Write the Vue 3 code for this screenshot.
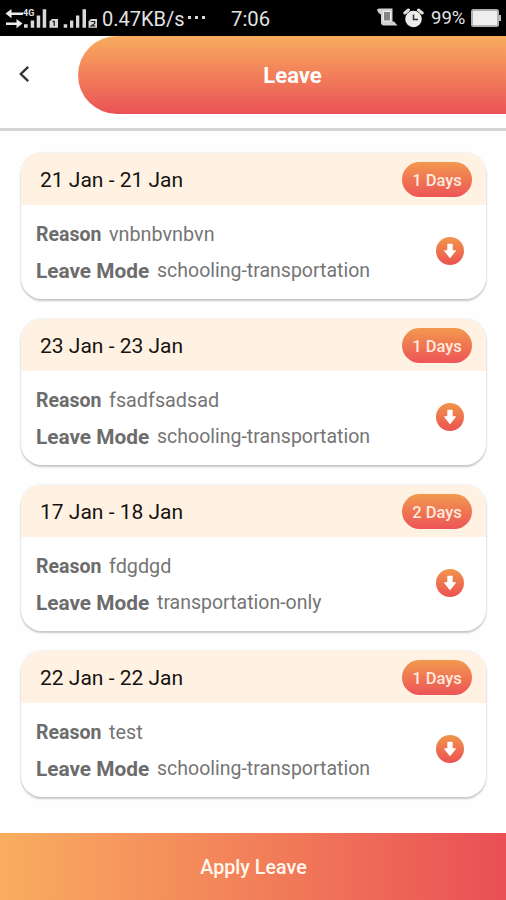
<script setup>
const leaves = [
  { id: 1, dates: '21 Jan - 21 Jan', days: 1, reason: 'vnbnbvnbvn', mode: 'schooling-transportation' },
  { id: 2, dates: '23 Jan - 23 Jan', days: 1, reason: 'fsadfsadsad', mode: 'schooling-transportation' },
  { id: 3, dates: '17 Jan - 18 Jan', days: 2, reason: 'fdgdgd', mode: 'transportation-only' },
  { id: 4, dates: '22 Jan - 22 Jan', days: 1, reason: 'test', mode: 'schooling-transportation' },
]
</script>

<template>
  <div class="screen">
    <div class="status">
      <svg class="signals" width="94" height="24" viewBox="0 0 94 24">
        <path d="M0.500 6.600L6.500 2V5.500H18V7.900H6.500V11.200zM17.500 16.600L11.500 12V15.500H1V17.900H11.500V21.200z" fill="#ececec" />
        <text x="18" y="8.500" class="network">4G</text>
        <g fill="#dadada">
          <path d="M19 17.300h3.700v3.500H19zM25.700 13.500h3.500v7.300h-3.500zM31.700 8.500h3.500v12.300h-3.500zM37.700 2.200h3.500v18.600h-3.500z" />
          <path d="M58.700 17.300h3.500v3.500h-3.500zM65 13.500h3.300v7.300H65zM71 8.500h3.300v12.300H71zM77.500 2.200H81v18.600h-3.500z" />
          <path d="M47 12h6v8.800h-8.500V14.500z" />
          <path d="M86 12h6v8.800h-8.500V14.500z" />
        </g>
        <path d="M47.500 14.500h1.700v4.500" fill="none" stroke="#222" stroke-width="1.300" />
        <path d="M85.700 14.500h4v2l-3.500 2.300h4" fill="none" stroke="#222" stroke-width="1.200" />
      </svg>
      <span class="speed">0.47KB/s</span>
      <span class="dots"><i></i><i></i><i></i></span>
      <span class="clock">7:06</span>
      <svg class="scroll" width="21" height="19" viewBox="0 0 21 19">
        <path d="M0 1.500Q1 0.500 3 0.500H15.500V13.500H17L20.500 17.500H7Q4 17.500 4 14.500V6.500Q1 5.500 0 1.500z" fill="#d2d2d2" />
        <path d="M6.500 3.500h7v9.500h-7z" fill="#858585" stroke="#f0f0f0" />
      </svg>
      <svg class="alarm" width="21" height="20" viewBox="0 0 21 20">
        <circle cx="10.500" cy="11" r="8.300" fill="#ececec" />
        <path d="M1.800 5L5.500 2M15.500 2L19.200 5" stroke="#ddd" stroke-width="3" stroke-linecap="round" />
        <path d="M10.500 6.500V11.500H15" fill="none" stroke="#333" stroke-width="1.500" />
      </svg>
      <span class="percent">99%</span>
      <svg class="battery" width="30" height="18" viewBox="0 0 30 18">
        <rect x="1" y="1" width="26" height="16" rx="1.500" fill="#eee" stroke="#b0b0b0" stroke-width="2" />
        <path d="M28 6h2v6h-2z" fill="#bbb" />
      </svg>
    </div>

    <header class="header">
      <button class="back" aria-label="Back">
        <svg width="12" height="18" viewBox="0 0 12 18">
          <path d="M10.200 1.800L2.800 9L10.200 16.200" fill="none" stroke="#333" stroke-width="2.400" />
        </svg>
      </button>
      <h1 class="banner"><span>Leave</span></h1>
    </header>

    <main class="list">
      <article v-for="leave in leaves" :key="leave.id" class="card">
        <div class="card-head">
          <span class="dates">{{ leave.dates }}</span>
          <span class="badge"><span>{{ leave.days }} Days</span></span>
        </div>
        <div class="card-body">
          <div class="details">
            <p><b class="reason-label">Reason</b><span class="reason">{{ leave.reason }}</span></p>
            <p><b class="mode-label">Leave Mode</b><span class="mode">{{ leave.mode }}</span></p>
          </div>
          <button class="download" aria-label="Download">
            <svg width="14" height="18" viewBox="0 0 14 18">
              <path d="M4.300 2.200Q4.300 1.700 4.800 1.700H9.200Q9.700 1.700 9.700 2.200V8.300H12.600Q13.300 8.300 12.800 9L7.500 15.700Q7 16.200 6.500 15.700L1.200 9Q0.700 8.300 1.400 8.300H4.300z" fill="#fff" />
            </svg>
          </button>
        </div>
      </article>
    </main>

    <button class="apply"><span>Apply Leave</span></button>
  </div>
</template>

<style>
body { margin: 0; background: #fff; }
</style>

<style scoped>
* { box-sizing: border-box; }
.screen { width: 506px; height: 900px; display: flex; flex-direction: column; overflow: hidden; background: #fefefe; font-family: Roboto, sans-serif; }
button { border: 0; padding: 0; font-family: inherit; }
.status { height: 35.500px; flex: none; display: flex; align-items: center; padding-left: 5px; background: #000; color: #e2e2e2; font-size: 20px; line-height: 36px; white-space: nowrap; }
.status > * { flex: none; }
.signals { margin-top: 2px; }
.network { font: bold 9px Roboto, sans-serif; fill: #e4e4e4; }
.speed { width: 83px; margin-left: 3px; padding-top: 2px; }
.dots { display: flex; gap: 4px; margin-left: 3px; }
.dots i { width: 3px; height: 3px; background: #d8d8d8; }
.clock { width: 40px; margin-left: 26px; padding-top: 2px; font-size: 20.300px; }
.scroll { margin-left: 106px; }
.alarm { margin-left: 5px; }
.percent { width: 36px; margin-left: 7px; font-size: 18.500px; }
.battery { margin-left: 4px; }
.header { height: 95.500px; flex: none; display: flex; border-bottom: 3px solid #d3d5d4; background: #fff; }
.back { width: 78px; height: 77px; display: flex; align-items: center; padding-left: 18px; background: transparent; }
.banner { flex: 1; height: 78.500px; margin: 0; padding: 2px 0 0 1px; display: flex; align-items: center; justify-content: center; border-radius: 40px 0 0 40px; background: linear-gradient(#f9ac5f, #ea5256); color: #fff; font-size: 22px; font-weight: 700; line-height: 26px; }
.list { flex: 1; display: flex; flex-direction: column; gap: 20px; padding: 22px 20px 0 21px; }
.card { height: 146px; flex: none; border-radius: 21px; overflow: hidden; background: #fff; box-shadow: 0 2px 2px #c8c8c8, 0 0 2px #d4d4d4; }
.card-head { height: 52px; display: flex; align-items: center; justify-content: space-between; padding: 0 14px 0 19px; background: #fff2e3; }
.dates { padding-top: 2px; color: #161310; font-size: 21px; line-height: 26px; }
.badge { width: 70px; height: 35px; margin-top: 1px; padding-top: 2px; display: flex; align-items: center; justify-content: center; border-radius: 18px; background: linear-gradient(#f2994e, #ed5457); color: #ffe9df; font-size: 16.500px; font-weight: 500; line-height: 22px; }
.card-body { height: 94px; display: flex; justify-content: space-between; padding: 10px 22px 0 15px; color: #757575; font-size: 19.500px; }
.details p { height: 37px; margin: 0; display: flex; align-items: center; line-height: 37px; white-space: nowrap; }
.reason-label { width: 73px; padding-top: 1px; color: #6c6c6c; font-size: 19.500px; }
.reason { padding-top: 1px; font-size: 19.800px; }
.mode-label { width: 121px; padding-top: 1px; color: #6c6c6c; font-size: 20.800px; }
.download { width: 28px; height: 28px; margin-top: 22px; display: flex; align-items: center; justify-content: center; border-radius: 50%; background: linear-gradient(#f1964b, #eb5152); }
.apply { height: 67px; flex: none; padding: 2px 0 0 1px; display: flex; align-items: center; justify-content: center; background: linear-gradient(90deg, #f9ad60, #f28059 50%, #ea4f56); color: #fff6ec; font-size: 19.700px; font-weight: 500; line-height: 26px; }
</style>
